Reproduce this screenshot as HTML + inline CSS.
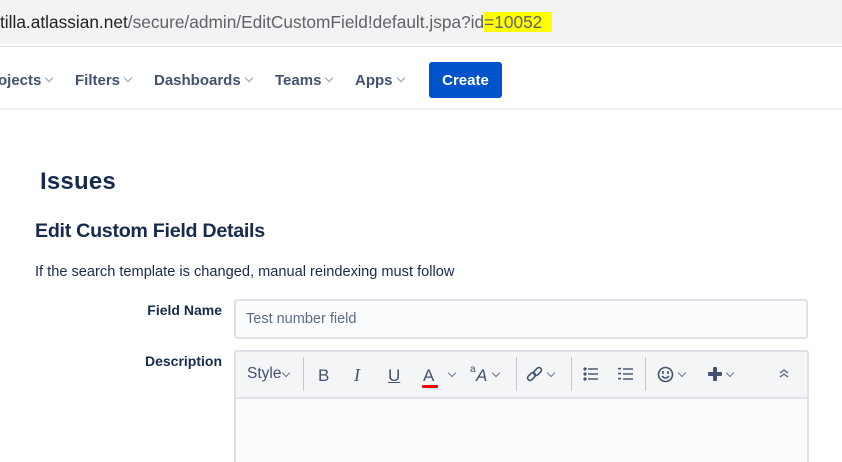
<!DOCTYPE html>
<html><head><meta charset="utf-8"><style>
*{margin:0;padding:0;box-sizing:border-box}
html,body{width:842px;height:462px;overflow:hidden}
body{background:#fff;font-family:"Liberation Sans",Arial,sans-serif;position:relative}
.a{position:absolute;white-space:nowrap}
.nav{color:#42526e;font-size:15px;font-weight:bold;top:72px}
.chev{display:inline-block;width:6px;height:6px;border-right:1.7px solid #97a0af;border-bottom:1.7px solid #97a0af;transform:rotate(45deg);margin-left:5px;position:relative;top:-4px}
.tb{color:#42526e;font-size:16px;top:366px}
.sep{position:absolute;top:357px;width:1px;height:34px;background:#c1c7d0}
.tc{display:inline-block;width:6px;height:6px;border-right:1.7px solid #6b778c;border-bottom:1.7px solid #6b778c;transform:rotate(45deg);position:absolute}
</style></head><body>
<div class="a" style="left:0;top:0;width:842px;height:44px;background:#f1f3f4"></div>
<div class="a" style="left:0;top:46px;width:842px;height:1px;background:#dadce0"></div>
<div class="a" style="left:0;top:12px;font-size:17.3px;color:#202124"><span>tilla.atlassian.net</span><span style="color:#5f6368">/secure/admin/EditCustomField!default.jspa?id<span style="background:#ffff00">=10052&nbsp;&nbsp;</span></span></div>
<div class="a" style="left:0;top:108px;width:842px;height:3px;background:linear-gradient(#e6e8eb,#fff)"></div>
<div class="a nav" style="left:-2px">ojects<span class="chev"></span></div>
<div class="a nav" style="left:75px">Filters<span class="chev"></span></div>
<div class="a nav" style="left:154px">Dashboards<span class="chev"></span></div>
<div class="a nav" style="left:275px">Teams<span class="chev"></span></div>
<div class="a nav" style="left:355px">Apps<span class="chev"></span></div>
<div class="a" style="left:429px;top:62px;width:73px;height:36px;background:#0052cc;border-radius:3px;color:#fff;font-weight:bold;font-size:15px;text-align:center;line-height:37px">Create</div>
<div class="a" style="left:40px;top:168px;font-size:24px;color:#172b4d;font-weight:bold;letter-spacing:0.2px">Issues</div>
<div class="a" style="left:35px;top:220px;font-size:19.7px;color:#172b4d;font-weight:bold;letter-spacing:-0.3px">Edit Custom Field Details</div>
<div class="a" style="left:35px;top:264px;font-size:14.6px;color:#172b4d">If the search template is changed, manual reindexing must follow</div>
<div class="a" style="left:130px;width:92px;text-align:right;top:302px;font-size:14px;color:#172b4d;font-weight:bold">Field Name</div>
<div class="a" style="left:234px;top:299px;width:574px;height:40px;border:2px solid #dfe1e6;border-radius:3px;background:#fafbfc;color:#5e6c84;font-size:14.5px;padding:10px 0 0 10px">Test number field</div>
<div class="a" style="left:130px;width:92px;text-align:right;top:353px;font-size:14px;color:#172b4d;font-weight:bold">Description</div>
<div class="a" style="left:234px;top:350px;width:575px;height:130px;border:2px solid #dfe1e6;border-radius:3px;background:#fafbfc"></div>
<div class="a" style="left:236px;top:352px;width:571px;height:47px;background:#f4f5f7;border-bottom:2px solid #dfe1e6"></div>
<div class="a tb" style="left:247px;font-size:15.5px;top:365px">Style</div><span class="tc" style="left:283px;top:370px"></span>
<div class="sep" style="left:303px"></div>
<div class="a tb" style="left:318px;font-size:17px">B</div>
<div class="a tb" style="left:354px;font-family:'Liberation Serif',serif;font-style:italic;font-size:18px;top:365px">I</div>
<div class="a tb" style="left:388px;text-decoration:underline;font-size:17px">U</div>
<div class="a tb" style="left:423px;font-size:17px">A</div>
<div class="a" style="left:422px;top:385px;width:16px;height:3px;background:#e00;border-radius:1px"></div>
<span class="tc" style="left:449px;top:370px"></span>
<div class="a tb" style="left:470px;font-size:10px;top:364px">a</div>
<div class="a tb" style="left:476px;font-style:italic;font-size:17px">A</div>
<span class="tc" style="left:493px;top:370px"></span>
<div class="sep" style="left:516px"></div>
<svg class="a" style="left:525px;top:365px" width="20" height="20" viewBox="0 0 20 20" fill="none" stroke="#42526e" stroke-width="1.6"><rect x="2" y="9" width="9" height="5" rx="2.5" transform="rotate(-45 6.5 11.5)"/><rect x="8" y="4" width="9" height="5" rx="2.5" transform="rotate(-45 12.5 6.5)"/></svg>
<span class="tc" style="left:548px;top:370px"></span>
<div class="sep" style="left:571px"></div>
<svg class="a" style="left:583px;top:367px" width="16" height="14" fill="#42526e"><circle cx="2" cy="2" r="1.6"/><circle cx="2" cy="7" r="1.6"/><circle cx="2" cy="12" r="1.6"/><rect x="5" y="1.3" width="10" height="1.4"/><rect x="5" y="6.3" width="10" height="1.4"/><rect x="5" y="11.3" width="10" height="1.4"/></svg>
<svg class="a" style="left:618px;top:367px" width="16" height="14" fill="#42526e"><rect x="0" y="0.8" width="3" height="1.6"/><rect x="0" y="5.8" width="3" height="1.6"/><rect x="0" y="10.8" width="3" height="1.6"/><rect x="5" y="1.3" width="10" height="1.4"/><rect x="5" y="6.3" width="10" height="1.4"/><rect x="5" y="11.3" width="10" height="1.4"/></svg>
<div class="sep" style="left:645px"></div>
<svg class="a" style="left:657px;top:366px" width="17" height="17" fill="none" stroke="#42526e" stroke-width="1.6"><circle cx="8.5" cy="8.5" r="7"/><path d="M6 5v3M11 5v3M5 10q3.5 4 7 0"/></svg>
<span class="tc" style="left:679px;top:370px"></span>
<svg class="a" style="left:708px;top:367px" width="14" height="14" fill="#42526e"><rect x="5" y="0" width="4" height="14" rx="1"/><rect x="0" y="5" width="14" height="4" rx="1"/></svg>
<span class="tc" style="left:727px;top:370px"></span>
<svg class="a" style="left:778px;top:368px" width="12" height="10" fill="none" stroke="#6b778c" stroke-width="1.5"><path d="M2 5l4-3 4 3M2 9l4-3 4 3"/></svg>
</body></html>
